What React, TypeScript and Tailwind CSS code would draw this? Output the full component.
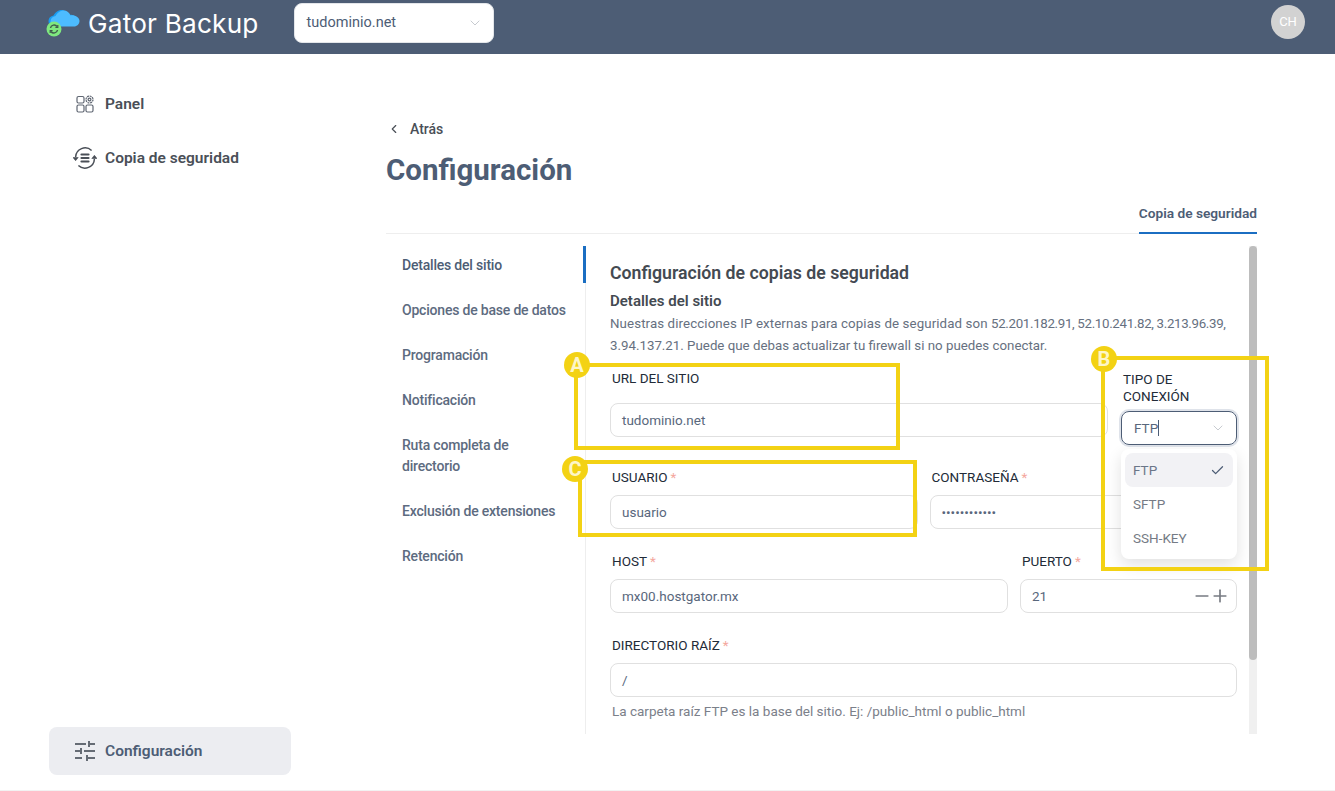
import { ChevronDown, ChevronLeft, Check, Minus, Plus } from "lucide-react";
import type { ReactNode } from "react";

const tabs = [
  "Detalles del sitio",
  "Opciones de base de datos",
  "Programación",
  "Notificación",
  "Ruta completa de directorio",
  "Exclusión de extensiones",
  "Retención",
];

const cloud =
  "M9 20c-3 0-5-2-5-5 0-3 2-5 5-5.500C10.500 6.500 13.500 4 17 4c3.500 0 6 2 7 5 .5-.2 1-.2 1.500-.2 4 0 7.500 2.500 7.500 5.700 0 3-2.500 5.500-5.500 5.500z";

function LogoIcon() {
  return (
    <svg width="36" height="32" viewBox="0 0 36 32" className="shrink-0 -translate-y-[5px]">
      <path d={cloud} fill="#1a9cf0" transform="translate(-1.500 0)" />
      <path d={cloud} fill="#4dbcff" transform="translate(0.500 0.500)" />
      <circle cx="8" cy="23" r="7.500" fill="#7fe87f" />
      <path d="M4.500 22a3.600 3.600 0 0 1 6.500-1.500M11.500 24a3.600 3.600 0 0 1-6.500 1.500" fill="none" stroke="#3f5a4c" strokeWidth="1.400" />
      <path d="M11.800 19v2.400h-2.400M4.200 27v-2.400h2.400" fill="none" stroke="#3f5a4c" strokeWidth="1.200" />
    </svg>
  );
}

function PanelIcon() {
  return (
    <svg width="18" height="18" viewBox="0 0 18 18" fill="none" stroke="#5f6672" strokeWidth="1.200">
      <rect x="1" y="1.500" width="7" height="6.500" rx="1.500" />
      <rect x="1" y="10" width="7" height="7" rx="1.500" />
      <rect x="10" y="10" width="7" height="7" rx="1.500" />
      <circle cx="13.500" cy="4.500" r="3.500" strokeDasharray="2 0.700" />
      <circle cx="13.500" cy="4.500" r="1.400" />
    </svg>
  );
}

function BackupIcon() {
  return (
    <svg width="24" height="22" viewBox="0 0 24 22" fill="none" stroke="#4a4f57" strokeWidth="1.500">
      <path d="M2.600 10a9.500 9.500 0 0 1 16-6.500" />
      <path d="M21.400 12a9.500 9.500 0 0 1-16 6.500" />
      <path d="M0 10.500l2.600 3.200 2.600-3.200z" fill="#4a4f57" strokeWidth="0.600" />
      <path d="M18.800 11.500l2.600-3.200 2.600 3.200z" fill="#4a4f57" strokeWidth="0.600" />
      <path d="M8.500 7.500h7M8.500 11h7M8.500 14.500h7" strokeWidth="2.200" strokeLinecap="round" />
    </svg>
  );
}

function TuneIcon() {
  return (
    <svg width="20" height="20" viewBox="0 0 20 20" fill="#666c75">
      <rect x="0" y="2" width="11" height="2" />
      <rect x="13" y="0" width="2" height="6" />
      <rect x="15" y="2" width="5" height="2" />
      <rect x="0" y="9" width="5" height="2" />
      <rect x="5" y="7" width="2" height="6" />
      <rect x="9" y="9" width="11" height="2" />
      <rect x="0" y="16" width="7" height="2" />
      <rect x="11" y="14" width="2" height="6" />
      <rect x="13" y="16" width="7" height="2" />
    </svg>
  );
}

function NavItem({ icon, label }: { icon: ReactNode; label: string }) {
  return (
    <div className="relative flex h-[54px] items-center pl-[56px] text-[15.5px] font-semibold text-[#4a4f57]">
      <span className="absolute left-6 flex w-6 justify-center">{icon}</span>
      <span className="pt-[2px]">{label}</span>
    </div>
  );
}

function FieldLabel({ text, required }: { text: string; required?: boolean }) {
  return (
    <div className="ml-0.5 h-[18px] text-[13.5px] leading-[17px] text-[#222b38]">
      {text}
      {required && <span className="ml-[3px] text-[#f4a79d]">*</span>}
    </div>
  );
}

function TextBox({ children }: { children?: ReactNode }) {
  return (
    <div className="mt-2 flex h-[34px] items-center justify-between rounded-lg border border-[#e0e0e0] bg-white px-[11px] text-[13.5px] text-[#59677c]">
      {children}
    </div>
  );
}

function Badge({ letter, className }: { letter: string; className: string }) {
  return (
    <div
      className={`absolute flex h-[26px] w-[26px] items-center justify-center rounded-full bg-[#f3d214] text-[20px] font-bold text-[#fdf6c8] ${className}`}
    >
      {letter}
    </div>
  );
}

export default function App() {
  return (
    <div className="relative flex h-[791px] flex-col overflow-hidden border-b border-[#f2f2f2] bg-white font-['Roboto',sans-serif]">
      {/* header */}
      <header className="flex h-[54px] shrink-0 items-center bg-[#4d5d75] pr-[30px] pl-[46px]">
        <LogoIcon />
        <span className="ml-1.5 -translate-y-[3px] font-['Inter',sans-serif] text-[26.2px] font-normal tracking-[0.2px] text-white">
          Gator Backup
        </span>
        <div className="ml-[35px] flex h-10 w-[200px] -translate-y-1 items-center justify-between rounded-lg border border-[#e3e6ea] bg-white pr-[10px] pl-3 text-[14.5px] text-[#4d5d75]">
          tudominio.net
          <ChevronDown size={16} strokeWidth={1} className="text-[#aab0b8]" />
        </div>
        <div className="ml-auto flex h-[34px] w-[34px] -translate-y-[5px] items-center justify-center rounded-full bg-[#d2d2d2] text-[13px] text-white">
          CH
        </div>
      </header>

      <div className="flex min-h-0 flex-1">
        {/* side menu */}
        <aside className="flex w-[386px] shrink-0 flex-col pt-[23px] pl-[49px]">
          <NavItem icon={<PanelIcon />} label="Panel" />
          <NavItem icon={<BackupIcon />} label="Copia de seguridad" />
          <div className="mt-auto mb-[15px] flex h-12 w-[242px] items-center gap-2.5 rounded-lg bg-[#ecedf1] pl-[26px] text-[15.5px] font-semibold text-[#4d5d75]">
            <TuneIcon />
            <span className="pt-[2px]">Configuración</span>
          </div>
        </aside>

        {/* main */}
        <main className="flex w-[871px] shrink-0 flex-col pt-[65px]">
          <div className="flex h-5 items-center gap-[9px] pl-[1px] text-[14px] font-medium text-[#4a4f57]">
            <ChevronLeft size={14} strokeWidth={2} />
            Atrás
          </div>
          <h1 className="mt-[11px] h-10 text-[29.5px] leading-10 font-bold text-[#4d5d75]">Configuración</h1>

          <div className="mt-[3px] flex h-[41px] justify-end border-b border-[#eeeeee]">
            <div className="flex h-[41px] items-center border-b-2 border-[#1b6ec2] pt-[2px] text-[13.7px] font-semibold text-[#4d5d75]">
              Copia de seguridad
            </div>
          </div>

          <div className="mt-3 flex h-[488px]">
            {/* section tabs */}
            <div className="flex w-[200px] shrink-0 flex-col gap-2 border-r border-[#eeeeee]">
              {tabs.map((tab, i) => (
                <div
                  key={tab}
                  className={`relative px-4 pt-[9px] pb-[7px] text-[14px] leading-[21px] font-medium tracking-[-0.2px] ${
                    i === 0 ? "text-[#4d5d75]" : "text-[#5d6b80]"
                  }`}
                >
                  {tab}
                  {i === 0 && <span className="absolute top-0 -right-px bottom-0 w-[3px] bg-[#1b6ec2]" />}
                </div>
              ))}
            </div>

            {/* form */}
            <div className="ml-6 w-[627px] shrink-0 pt-[15px]">
              <h2 className="text-[17.7px] leading-6 font-semibold text-[#444a52]">
                Configuración de copias de seguridad
              </h2>
              <h3 className="mt-1.5 text-[15px] leading-5 font-semibold text-[#444a52]">Detalles del sitio</h3>
              <p className="mt-0.5 text-[13.3px] leading-[22px] text-[#667080]">
                <span className="tracking-[0.1px]">Nuestras direcciones IP externas para copias de seguridad son </span>
                <span className="tracking-[-0.32px]">52.201.182.91, 52.10.241.82, 3.213.96.39,</span>{" "}
                3.94.137.21. Puede que debas actualizar tu firewall si no puedes conectar.
              </p>

              <div className="mt-3.5 flex gap-[13px]">
                <div className="flex-1">
                  <div className="-mt-[1px]">
                    <FieldLabel text="URL DEL SITIO" />
                  </div>
                  <div className="mt-[15px] flex h-[34px] items-center rounded-lg border border-[#e0e0e0] px-[11px] text-[13.5px] text-[#59677c]">
                    tudominio.net
                  </div>
                </div>
                <div className="w-[116px]">
                  <div className="ml-0.5 text-[13.5px] leading-[17px] text-[#222b38]">
                    TIPO DE
                    <br />
                    CONEXIÓN
                  </div>
                  <div className="relative mt-1.5 flex h-[34px] items-center justify-between rounded-lg border border-[#4d5d75] pr-[10px] pl-3 text-[13.5px] text-[#59677c] ring-2 ring-[#dfe3ea]">
                    <span className="flex items-center">
                      FTP
                      <span className="h-4 w-px bg-[#4d5d75]" />
                    </span>
                    <ChevronDown size={16} strokeWidth={1} className="text-[#aab0b8]" />
                    <div className="absolute top-[37px] -left-px z-10 w-[116px] rounded-lg bg-white p-1 shadow-[0_6px_16px_rgba(0,0,0,0.12)]">
                      <div className="flex h-[34px] items-center justify-between rounded-lg bg-[#f2f2f5] px-2 pt-px text-[#6b7688]">
                        FTP
                        <Check size={15} strokeWidth={2} className="text-[#4d5d75]" />
                      </div>
                      <div className="flex h-[34px] items-center px-2 pt-px text-[#757b85]">SFTP</div>
                      <div className="flex h-[34px] items-center px-2 pt-px text-[#757b85]">SSH-KEY</div>
                    </div>
                  </div>
                </div>
              </div>

              <div className="mt-6 flex gap-3">
                <div className="flex-1">
                  <FieldLabel text="USUARIO" required />
                  <TextBox>usuario</TextBox>
                </div>
                <div className="flex-1">
                  <FieldLabel text="CONTRASEÑA" required />
                  <TextBox>••••••••••••</TextBox>
                </div>
              </div>

              <div className="mt-6 flex gap-3">
                <div className="flex-1">
                  <FieldLabel text="HOST" required />
                  <TextBox>mx00.hostgator.mx</TextBox>
                </div>
                <div className="w-[217px]">
                  <FieldLabel text="PUERTO" required />
                  <TextBox>
                    21
                    <span className="-mr-[5px] flex items-center -space-x-0.5 text-[#777b82]">
                      <Minus size={20} strokeWidth={2} />
                      <Plus size={20} strokeWidth={2} />
                    </span>
                  </TextBox>
                </div>
              </div>

              <div className="mt-6">
                <FieldLabel text="DIRECTORIO RAÍZ" required />
                <TextBox>/</TextBox>
                <p className="mt-1 ml-0.5 text-[13.5px] leading-5 text-[#7b808a]">
                  La carpeta raíz FTP es la base del sitio. Ej: /public_html o public_html
                </p>
              </div>
            </div>

            {/* scrollbar */}
            <div className="ml-3 h-full w-2 bg-[#f0f0f0]">
              <div className="h-[414px] w-2 rounded-[4px] bg-[#bdbdbd]" />
            </div>
          </div>
        </main>
      </div>

      {/* annotation boxes */}
      <div className="absolute top-[363px] left-[574px] h-[87px] w-[326px] border-4 border-[#f3d214]" />
      <div className="absolute top-[460px] left-[578px] h-[77px] w-[339px] border-4 border-[#f3d214]" />
      <div className="absolute top-[356px] left-[1101px] z-20 h-[215px] w-[168px] border-4 border-[#f3d214]" />
      <Badge letter="A" className="top-[352px] left-[564px]" />
      <Badge letter="C" className="top-[456px] left-[562px]" />
      <Badge letter="B" className="top-[346px] left-[1091px] z-20" />
    </div>
  );
}
